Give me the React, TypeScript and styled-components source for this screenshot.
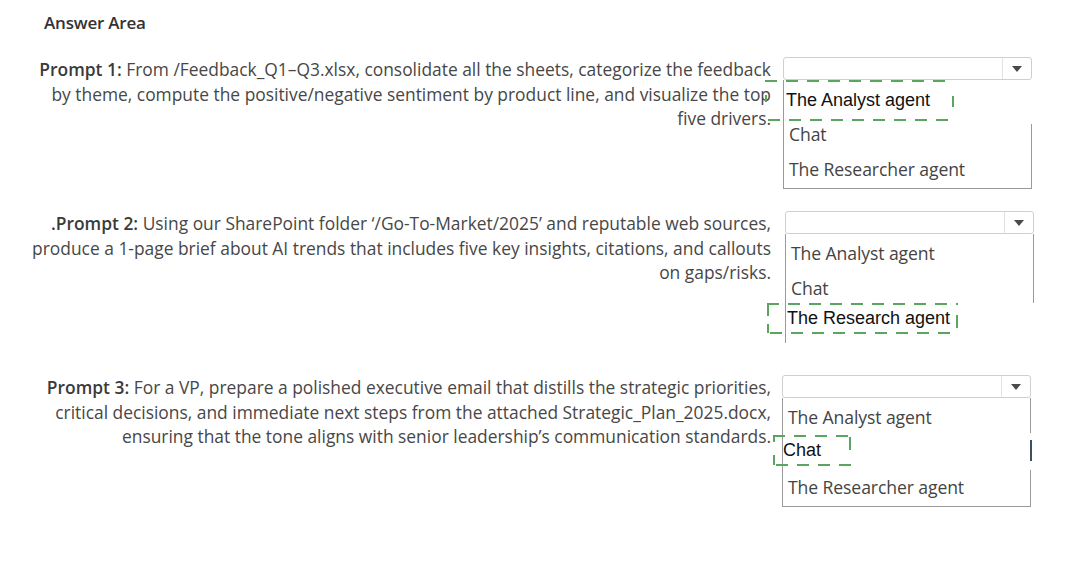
import styled, { createGlobalStyle } from "styled-components";

const GlobalStyle = createGlobalStyle`
  html, body {
    margin: 0;
    padding: 0;
    background: #ffffff;
  }
`;

const Page = styled.div`
  width: 1072px;
  height: 570px;
  box-sizing: border-box;
  padding-top: 13px;
  background: #ffffff;
  font-family: "Open Sans", "Noto Sans", sans-serif;
  color: #444444;
  overflow: hidden;
`;

const Heading = styled.h2`
  margin: 0 0 0 44px;
  font-size: 17px;
  font-weight: 600;
  line-height: 20px;
  letter-spacing: -0.2px;
  color: #333333;
`;

const Row = styled.div<{ $gap: number }>`
  display: flex;
  align-items: flex-start;
  margin-top: ${(p) => p.$gap}px;
`;

const PromptText = styled.p`
  flex: 0 0 771px;
  margin: 0;
  text-align: right;
  white-space: nowrap;
  font-size: 17.4px;
  line-height: 24.5px;
  color: #474747;
`;

const Label = styled.span`
  font-weight: 600;
  color: #3a3a3a;
`;

const AnswerColumn = styled.div<{ $shift: number }>`
  flex: 0 0 249px;
  margin-left: ${(p) => 12 + p.$shift}px;
  display: flex;
  flex-direction: column;
`;

const Select = styled.div`
  height: 23px;
  box-sizing: border-box;
  border: 1px solid #cfcfcf;
  border-radius: 3px;
  background: #ffffff;
  display: flex;
  justify-content: flex-end;
`;

const ArrowPart = styled.div`
  width: 28px;
  border-left: 1px solid #e2e2e2;
  display: flex;
  align-items: center;
  justify-content: center;

  &::after {
    content: "";
    border-left: 5px solid transparent;
    border-right: 5px solid transparent;
    border-top: 6px solid #4a4a4a;
  }
`;

const OptionList = styled.ul`
  position: relative;
  margin: 0;
  padding: 2px 0 1px;
  list-style: none;
  border: 1px solid #9a9a9a;
  border-top: none;
  background: #ffffff;
`;

const Option = styled.li`
  height: 35px;
  line-height: 35px;
  padding-left: 5px;
  font-size: 17.6px;
  letter-spacing: -0.1px;
  color: #444444;
  white-space: nowrap;
`;

const Cover = styled.div<{ $top: number; $height: number }>`
  position: absolute;
  left: 0;
  right: -5px;
  top: ${(p) => p.$top}px;
  height: ${(p) => p.$height}px;
  background: #ffffff;
`;

const Picked = styled.div<{
  $left: number;
  $top: number;
  $width: number;
  $height: number;
  $pad: number;
}>`
  position: absolute;
  left: ${(p) => p.$left}px;
  top: ${(p) => p.$top}px;
  width: ${(p) => p.$width}px;
  height: ${(p) => p.$height}px;
  padding-left: ${(p) => p.$pad}px;
  box-sizing: border-box;
  display: flex;
  align-items: center;
  font-family: "Liberation Sans", Arial, sans-serif;
  font-size: 18px;
  color: #111111;
  white-space: nowrap;

  svg {
    position: absolute;
    left: 0;
    top: 0;
    overflow: visible;
  }
`;

const Caret = styled.span`
  position: absolute;
  right: -2px;
  top: 42px;
  width: 2px;
  height: 21px;
  background: #3f4f63;
`;

type Dash = [number, number];

const GREEN = "#5aa65e";

function DashFrame({
  width,
  height,
  left,
  right,
}: {
  width: number;
  height: number;
  left: Dash[];
  right: Dash[];
}) {
  return (
    <svg width={width} height={height}>
      <g stroke={GREEN} strokeWidth={2} fill="none">
        <line x1={0} y1={1} x2={width} y2={1} strokeDasharray="12 9" />
        <line
          x1={3}
          y1={height - 1}
          x2={width}
          y2={height - 1}
          strokeDasharray="12 9"
        />
        {left.map(([a, b], i) => (
          <line key={"l" + i} x1={1} y1={a} x2={1} y2={b} />
        ))}
        {right.map(([a, b], i) => (
          <line key={"r" + i} x1={width - 1} y1={a} x2={width - 1} y2={b} />
        ))}
      </g>
    </svg>
  );
}

const OPTIONS = ["The Analyst agent", "Chat", "The Researcher agent"];

// options stay in the list, the chosen one is blanked and drawn by the overlay
const Options = ({ picked }: { picked: number }) => (
  <>
    {OPTIONS.map((o, i) => (
      <Option key={o}>{i === picked ? "" : o}</Option>
    ))}
  </>
);

const App = () => {
  return (
    <>
      <GlobalStyle />
      <Page>
        <Heading>Answer Area</Heading>

        <Row $gap={24}>
          <PromptText>
            <Label>Prompt 1:</Label> From /Feedback_Q1–Q3.xlsx, consolidate all
            the sheets, categorize the feedback
            <br />
            by theme, compute the positive/negative sentiment by product line,
            and visualize the top
            <br />
            five drivers.
          </PromptText>
          <AnswerColumn $shift={0}>
            <Select>
              <ArrowPart />
            </Select>
            <OptionList>
              <Options picked={0} />
              <Cover $top={0} $height={44} />
              <Picked $left={-19} $top={0} $width={189} $height={41} $pad={21}>
                <DashFrame
                  width={189}
                  height={41}
                  left={[[15, 22]]}
                  right={[[16, 27]]}
                />
                The Analyst agent
              </Picked>
            </OptionList>
          </AnswerColumn>
        </Row>

        <Row $gap={22}>
          <PromptText>
            <Label>.Prompt 2:</Label> Using our SharePoint folder
            ‘/Go-To-Market/2025’ and reputable web sources,
            <br />
            produce a 1-page brief about AI trends that includes five key
            insights, citations, and callouts
            <br />
            on gaps/risks.
          </PromptText>
          <AnswerColumn $shift={2}>
            <Select>
              <ArrowPart />
            </Select>
            <OptionList>
              <Options picked={2} />
              <Cover $top={69} $height={42} />
              <Picked $left={-19} $top={69} $width={191} $height={31} $pad={20}>
                <DashFrame
                  width={191}
                  height={31}
                  left={[
                    [0, 13],
                    [21, 30],
                  ]}
                  right={[[12, 25]]}
                />
                The Research agent
              </Picked>
            </OptionList>
          </AnswerColumn>
        </Row>

        <Row $gap={32}>
          <PromptText>
            <Label>Prompt 3:</Label> For a VP, prepare a polished executive
            email that distills the strategic priorities,
            <br />
            critical decisions, and immediate next steps from the attached
            Strategic_Plan_2025.docx,
            <br />
            ensuring that the tone aligns with senior leadership’s communication
            standards.
          </PromptText>
          <AnswerColumn $shift={-1}>
            <Select>
              <ArrowPart />
            </Select>
            <OptionList>
              <Options picked={1} />
              <Cover $top={35} $height={37} />
              <Caret />
              <Picked $left={-10} $top={37} $width={78} $height={31} $pad={10}>
                <DashFrame
                  width={78}
                  height={31}
                  left={[
                    [0, 7],
                    [20, 30],
                  ]}
                  right={[[2, 15]]}
                />
                Chat
              </Picked>
            </OptionList>
          </AnswerColumn>
        </Row>
      </Page>
    </>
  );
};

export default App;
